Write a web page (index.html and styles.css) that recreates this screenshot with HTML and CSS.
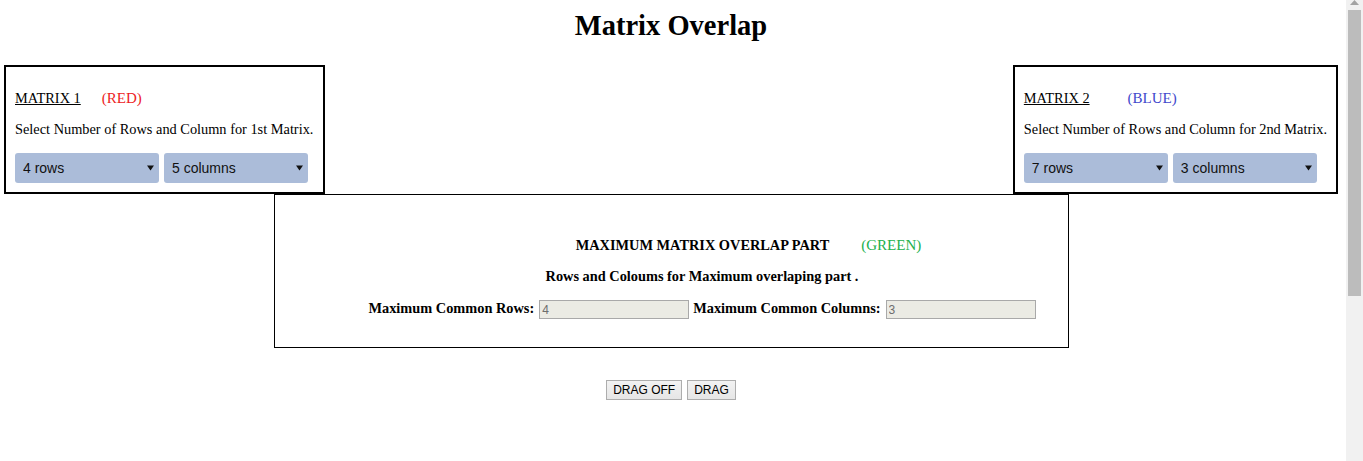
FILE: index.html
```html
<!DOCTYPE html>
<html lang="en">
<head>
<meta charset="utf-8">
<title>Matrix Overlap</title>
<link rel="stylesheet" href="styles.css">
</head>
<body>
<div class="page">
  <h1 class="title">Matrix Overlap</h1>
  <div class="top-row">
    <section class="matrix-panel">
      <p class="panel-head"><span class="panel-name">MATRIX 1</span><span class="tag tag-red">(RED)</span></p>
      <p class="panel-text">Select Number of Rows and Column for 1st Matrix.</p>
      <div class="select-row">
        <select class="dim-select"><option>4 rows</option></select>
        <select class="dim-select"><option>5 columns</option></select>
      </div>
    </section>
    <section class="matrix-panel">
      <p class="panel-head"><span class="panel-name">MATRIX 2</span><span class="tag tag-blue tag-wide">(BLUE)</span></p>
      <p class="panel-text">Select Number of Rows and Column for 2nd Matrix.</p>
      <div class="select-row">
        <select class="dim-select"><option>7 rows</option></select>
        <select class="dim-select"><option>3 columns</option></select>
      </div>
    </section>
  </div>
  <section class="overlap-panel">
    <p class="overlap-head"><b>MAXIMUM MATRIX OVERLAP PART</b><span class="tag tag-green">(GREEN)</span></p>
    <p class="overlap-sub"><b>Rows and Coloums for Maximum overlaping part .</b></p>
    <div class="overlap-fields">
      <label class="field-label">Maximum Common Rows:</label>
      <input class="field-input" type="text" value="4" disabled>
      <label class="field-label">Maximum Common Columns:</label>
      <input class="field-input" type="text" value="3" disabled>
    </div>
  </section>
  <div class="button-row">
    <button class="btn" type="button">DRAG OFF</button>
    <button class="btn" type="button">DRAG</button>
  </div>
</div>
<div class="scrollbar" aria-hidden="true">
  <svg class="scroll-arrow" width="9" height="5" viewBox="0 0 9 5"><path d="M4.5 0L9 5H0z" fill="#a3a3a3"/></svg>
  <div class="scroll-thumb"></div>
</div>
</body>
</html>
```

FILE: styles.css
```css
html, body {
  margin: 0;
  padding: 0;
  background: #fff;
}

body {
  display: flex;
  height: 100vh;
  overflow: hidden;
  font-family: "Liberation Serif", "Times New Roman", serif;
  font-size: 14.35px;
  color: #000;
}

.page {
  flex: 1;
  min-width: 0;
  padding: 10px 8px 0 4px;
}

.scrollbar {
  flex: none;
  width: 17px;
  height: 100%;
  background: #f1f1f1;
  display: flex;
  flex-direction: column;
  align-items: center;
}

.scroll-arrow {
  display: block;
  flex: none;
}

.scroll-thumb {
  flex: none;
  width: 13px;
  height: 286px;
  margin-top: 5px;
  background: #bcbcbc;
}

.title {
  margin: 0 0 23px;
  text-align: center;
  font-size: 28.5px;
  font-weight: bold;
  line-height: normal;
}

.top-row {
  display: flex;
  justify-content: space-between;
  align-items: flex-start;
}

.matrix-panel {
  border: 2px solid #000;
  padding: 9px;
}

.matrix-panel:first-child {
  padding-right: 10px;
}

.panel-head {
  margin: 14px 0;
}

.panel-name {
  text-decoration: underline;
}

.tag {
  font-size: 15px;
  margin-left: 21px;
}
.tag-wide {
  margin-left: 38px;
}
.tag-red { color: #ed1c24; }
.tag-blue { color: #3f48cc; }
.tag-green { color: #22b14c; margin-left: 32px; }

.panel-text {
  margin: 14px 0 0;
  white-space: nowrap;
}

.select-row {
  display: flex;
  gap: 5px;
  padding-top: 15px;
}

.dim-select {
  -webkit-appearance: none;
  appearance: none;
  box-sizing: border-box;
  width: 144px;
  height: 30px;
  margin: 0;
  padding: 0 8px;
  border: none;
  border-radius: 3px;
  font-family: "Liberation Sans", Arial, sans-serif;
  font-size: 14px;
  color: #111;
  background: #abbcd9 url("data:image/svg+xml,%3Csvg xmlns='http://www.w3.org/2000/svg' width='7' height='6'%3E%3Cpath d='M0 0.5H7L3.5 5.5z' fill='%23111'/%3E%3C/svg%3E") no-repeat right 5px center;
}

.overlap-panel {
  box-sizing: border-box;
  width: 795px;
  margin: 0 auto;
  border: 1px solid #000;
  padding: 28px 0 14px 62px;
  text-align: center;
}

.overlap-head {
  margin: 14px 0;
  padding-left: 93px;
}

.overlap-sub {
  margin: 14px 0 15px;
}

.overlap-fields {
  display: flex;
  justify-content: center;
  align-items: flex-start;
  gap: 4px;
  margin: 15px 0 14px;
}

.field-label {
  font-weight: bold;
}

.field-input {
  box-sizing: border-box;
  width: 150px;
  height: 19px;
  margin: 0 0 0 1px;
  padding: 0 2px;
  border: 1px solid #a9a9a9;
  background: #ebebe4;
  font-family: "Liberation Sans", Arial, sans-serif;
  font-size: 12px;
  color: #6d6d6d;
}

.button-row {
  display: flex;
  justify-content: center;
  gap: 5px;
  margin-top: 32px;
}

.btn {
  box-sizing: border-box;
  height: 20px;
  margin: 0;
  padding: 0 6px;
  border: 1px solid #adadad;
  border-radius: 0;
  background: linear-gradient(#f2f2f2, #e6e6e6);
  font-family: "Liberation Sans", Arial, sans-serif;
  font-size: 12px;
  color: #000;
}
```
